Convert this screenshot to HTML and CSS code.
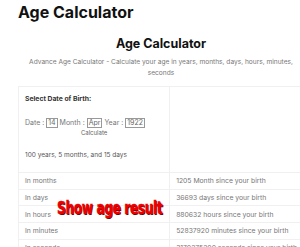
FILE: index.html
```html
<!DOCTYPE html>
<html>
<head>
	<title>Age Calculator</title>
	<link rel="stylesheet" href="styles.css">
</head>
<body>
	<h1 class="site-title">Age Calculator</h1>
	<div class="container">
		<h2>Age Calculator</h2>
		<p class="intro">Advance Age Calculator - Calculate your age in years, months, days, hours, minutes, seconds</p>
		<table class="age-table">
			<tr>
				<td class="form-cell">
					<div class="label">Select Date of Birth:</div>
					<div class="inputs">Date : <span class="box">14</span> Month : <span class="box">Apr</span> Year : <span class="box">1922</span></div>
					<div class="calc">Calculate</div>
					<div class="summary">100 years, 5 months, and 15 days</div>
				</td>
				<td></td>
			</tr>
			<tr><td>In months</td><td>1205 Month since your birth</td></tr>
			<tr><td>In days</td><td>36693 days since your birth</td></tr>
			<tr><td>In hours</td><td>880632 hours since your birth</td></tr>
			<tr><td>In minutes</td><td>52837920 minutes since your birth</td></tr>
			<tr><td>In seconds</td><td>3170275200 seconds since your birth</td></tr>
		</table>
	</div>
	<div class="stamp">Show age result</div>
</body>
</html>
```

FILE: styles.css
```css
html, body {
	margin: 0;
	overflow: hidden;
}
body {
	font-family: Inter, "Noto Sans", sans-serif;
	background-color: #fff;
	color: #222;
	width: 300px;
	height: 247px;
	position: relative;
}
.site-title {
	margin: 0;
	padding: 2px 0 0 18px;
	font-size: 16px;
	font-weight: 700;
	color: #111;
	line-height: 20px;
}
.container {
	margin-left: 18px;
	width: 286px;
}
h2 {
	margin: 14px 0 0;
	text-align: center;
	font-size: 12.5px;
	font-weight: 700;
	line-height: 16px;
	color: #111;
}
.intro {
	margin: 5px 0 0;
	text-align: center;
	font-size: 6.6px;
	line-height: 11px;
	color: #777;
	padding: 0 4px;
}
.age-table {
	margin-top: 7px;
	width: 100%;
	border-collapse: collapse;
	font-size: 6.8px;
	color: #777;
}
.age-table td {
	border: 1px solid #f0f0f0;
	padding: 0 6px;
	height: 15.7px;
	vertical-align: middle;
	white-space: nowrap;
}
.age-table td:first-child {
	width: 140px;
}
.age-table .form-cell {
	height: 79px;
	vertical-align: top;
	padding-top: 6px;
}
.label {
	font-weight: 700;
	color: #333;
	line-height: 12px;
}
.inputs {
	margin-top: 12px;
	font-size: 7px;
	line-height: 11px;
}
.box {
	display: inline-block;
	border: 1px solid #999;
	padding: 0 1px;
	line-height: 8px;
	color: #666;
}
.calc {
	text-align: center;
	font-size: 6px;
	line-height: 10px;
	color: #666;
}
.summary {
	margin-top: 13px;
	font-size: 6.5px;
	color: #555;
}
.stamp {
	position: absolute;
	left: 57px;
	top: 197px;
	font-family: "Liberation Sans Narrow", "DejaVu Sans Condensed", sans-serif;
	font-weight: 700;
	font-size: 15px;
	line-height: 18px;
	letter-spacing: -0.4px;
	color: #e00;
	-webkit-text-stroke: 0.4px #e00;
	text-shadow: 1px 1px 0 #500;
	transform-origin: left top;
	transform: scale(0.9, 1.2);
}
```
